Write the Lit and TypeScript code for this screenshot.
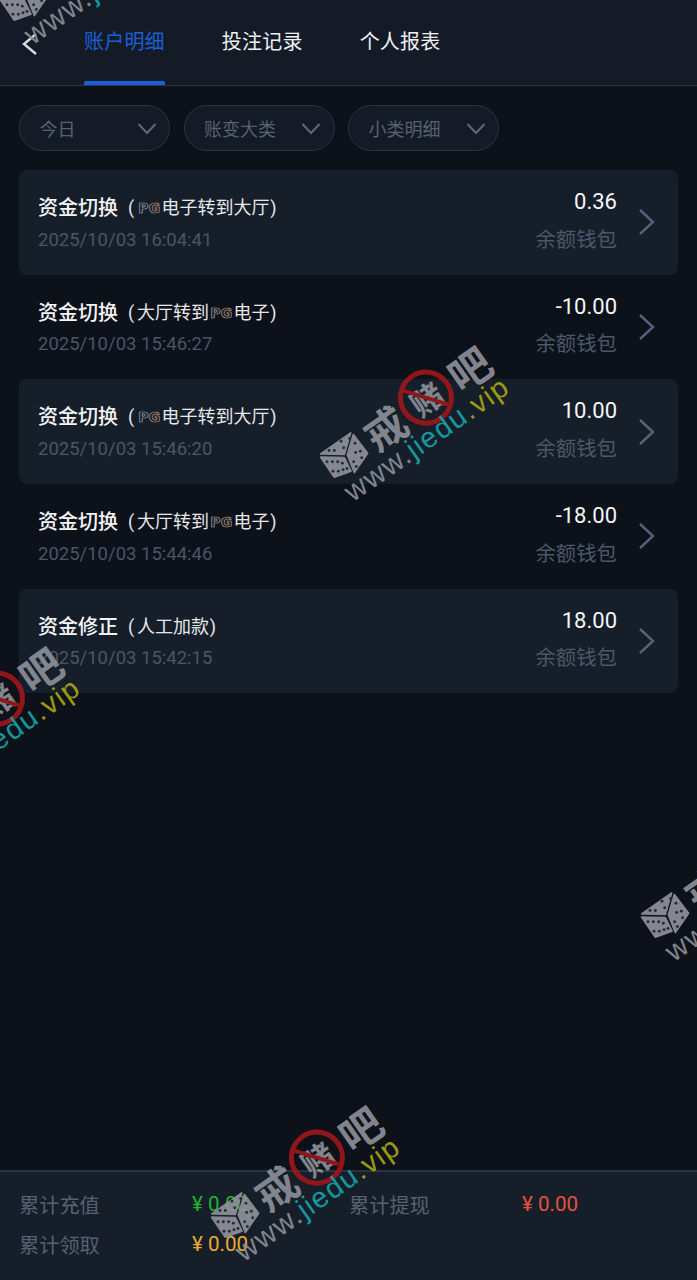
import { LitElement, html, css, svg } from "lit";
import { customElement } from "lit/decorators.js";

type Part = { t: string; pg?: boolean };
type Row = { title: string; note: Part[]; time: string; amount: string };

const ROWS: Row[] = [
  { title: "资金切换", note: [{ t: "PG", pg: true }, { t: "电子转到大厅" }], time: "2025/10/03 16:04:41", amount: "0.36" },
  { title: "资金切换", note: [{ t: "大厅转到" }, { t: "PG", pg: true }, { t: "电子" }], time: "2025/10/03 15:46:27", amount: "-10.00" },
  { title: "资金切换", note: [{ t: "PG", pg: true }, { t: "电子转到大厅" }], time: "2025/10/03 15:46:20", amount: "10.00" },
  { title: "资金切换", note: [{ t: "大厅转到" }, { t: "PG", pg: true }, { t: "电子" }], time: "2025/10/03 15:44:46", amount: "-18.00" },
  { title: "资金修正", note: [{ t: "人工加款" }], time: "2025/10/03 15:42:15", amount: "18.00" },
];

const MARKS: [number, number][] = [
  [344, 455],
  [235, 1215],
  [665, 915],
  [-85, 756],
  [24, -2],
];

const PIPS: [number, number][] = [
  [92, 22], [66, 30], [74, 50], [46, 58], [30, 58],
  [24, 92], [40, 92], [56, 92], [70, 96], [42, 120], [58, 120], [72, 116], [84, 112],
  [108, 36], [124, 60], [110, 64], [128, 80], [104, 92], [112, 106],
];

const dice = svg`<svg class="dice" viewBox="0 0 150 143" aria-hidden="true">
  <g fill="#8f9299" stroke="#8f9299" stroke-width="5" stroke-linejoin="round">
    <polygon points="95,5 5,68 76,70"></polygon>
    <polygon points="5,78 76,79 96,120 46,138"></polygon>
    <polygon points="103,10 146,66 106,124 85,71"></polygon>
  </g>
  <g fill="#2a2e37">
    ${PIPS.map(([x, y]) => svg`<circle cx=${x} cy=${y} r="4.4"></circle>`)}
  </g>
</svg>`;

@customElement("app-root")
export class AppRoot extends LitElement {
  static styles = css`
    :host {
      display: block;
      position: relative;
      width: 697px;
      height: 1280px;
      overflow: hidden;
      background: #0d1119;
      font-family: Roboto, "Noto Sans CJK SC", sans-serif;
      color: #fff;
    }
    .page { display: flex; flex-direction: column; height: 100%; }
    .bar {
      display: flex;
      align-items: stretch;
      height: 85px;
      flex: none;
      background: #141b27;
      border-bottom: 1px solid #2c3545;
      box-sizing: content-box;
    }
    .back { width: 84px; flex: none; display: flex; padding: 33px 0 0 22px; box-sizing: border-box; }
    .back svg { width: 18px; height: 22px; }
    .tabs { display: flex; gap: 57px; }
    .tab {
      position: relative;
      font-size: 20px;
      line-height: 24px;
      padding-top: 30px;
      color: #eef0f3;
      letter-spacing: 0.2px;
    }
    .tab.on { color: #1b5fd9; }
    .tab.on::after {
      content: "";
      position: absolute;
      left: 0;
      right: 0;
      bottom: 0;
      height: 4px;
      border-radius: 2px 2px 0 0;
      background: #1a5fdb;
    }
    .filters { display: flex; gap: 13.5px; padding: 19px; flex: none; }
    .pill {
      box-sizing: border-box;
      width: 151px;
      height: 46px;
      display: flex;
      align-items: center;
      justify-content: space-between;
      padding: 0 12.5px 0 19.5px;
      border: 1.5px solid #2b3442;
      border-radius: 23px;
      background: #141b26;
      font-size: 18px;
      color: #566173;
    }
    .pill svg { width: 20px; height: 13px; }
    .list { flex: 1; padding: 0 19px; display: flex; flex-direction: column; }
    .row {
      box-sizing: border-box;
      height: 104.7px;
      flex: none;
      display: flex;
      align-items: center;
      padding: 0 22px 0 19px;
      border-radius: 8px;
    }
    .row.alt { background: #161e2a; }
    .left { flex: 1; display: flex; flex-direction: column; gap: 6.5px; padding-top: 2px; }
    .head { display: flex; align-items: center; height: 26px; }
    .title { font-size: 20px; font-weight: 500; color: #f4f5f7; line-height: 26px; }
    .note { font-size: 18px; color: #e6e8ec; line-height: 26px; margin-left: 10px; display: flex; align-items: center; }
    .open { width: 9px; }
    .close { width: 7px; text-align: right; }
    .pg {
      font: 700 14px/1 "DejaVu Sans", sans-serif;
      color: #141a24;
      width: 24.5px;
      text-align: center;
      white-space: nowrap;
    }
    .pg b { font-weight: 700; -webkit-text-stroke: 0.7px #a9adb3; }
    .pg b + b { -webkit-text-stroke-color: #bd9a86; }
    .time { font-size: 18.5px; line-height: 24px; color: #4a5567; }
    .right { display: flex; flex-direction: column; align-items: flex-end; gap: 11.5px; margin: 0 21px 3px 0; }
    .amount { font-size: 22px; line-height: 26px; color: #f4f5f7; }
    .wallet { font-size: 20.4px; line-height: 26px; color: #4c5769; }
    .arrow { width: 18px; height: 28px; flex: none; }
    .foot {
      box-sizing: border-box;
      height: 110px;
      flex: none;
      background: #161e2a;
      border-top: 2px solid #2a3342;
      display: grid;
      grid-template-columns: 173px 157px 173px 1fr;
      grid-auto-rows: 40px;
      padding: 12px 19px 0;
      align-items: center;
      font-size: 20.2px;
    }
    .lab { color: #566172; }
    .val { font-size: 20.6px; }
    .green { color: #1fb52e; }
    .red { color: #e5513f; }
    .amber { color: #efa832; }

    .mark {
      position: absolute;
      width: 0;
      height: 0;
      transform: rotate(-35deg);
      pointer-events: none;
      opacity: 0.92;
    }
    .dice-wrap { position: absolute; left: -25px; top: -24px; width: 50px; height: 48px; transform: rotate(35deg); }
    .dice { width: 50px; height: 48px; display: block; }
    .han {
      position: absolute;
      top: -24px;
      font: 700 42px/48px "Noto Sans CJK SC", sans-serif;
      color: #8b8e96;
      white-space: nowrap;
    }
    .h1 { left: 28px; }
    .h3 { left: 131px; }
    .ban {
      position: absolute;
      left: 72px;
      top: -28px;
      box-sizing: border-box;
      width: 56px;
      height: 56px;
      border-radius: 50%;
      border: 5px solid #9c171c;
      display: flex;
      align-items: center;
      justify-content: center;
      font: 700 32px/1 "Noto Sans CJK SC", sans-serif;
      color: #8b8e96;
    }
    .ban::after {
      content: "";
      position: absolute;
      left: 0;
      right: 0;
      top: 50%;
      height: 4px;
      margin-top: -2px;
      background: #9c171c;
      transform: rotate(52deg);
    }
    .url {
      position: absolute;
      left: -20px;
      top: 17px;
      font: 400 29px/34px "Liberation Sans", sans-serif;
      letter-spacing: 1.4px;
      color: #8b8e96;
      white-space: nowrap;
    }
    .teal { color: #13a4a8; }
    .olive { color: #a8a50c; }
  `;

  private pill(label: string) {
    return html`<div class="pill"><span>${label}</span>
      <svg viewBox="0 0 20 13" fill="none" stroke="#5d6878" stroke-width="2"><path d="M1.5 2 L10 11 L18.5 2"></path></svg>
    </div>`;
  }

  render() {
    return html`
      <div class="page">
        <header class="bar">
          <div class="back">
            <svg viewBox="0 0 18 22" fill="none" stroke="#d9dbdf" stroke-width="2.4"><path d="M14 1 L2 11 L14 21"></path></svg>
          </div>
          <nav class="tabs">
            <div class="tab on">账户明细</div>
            <div class="tab">投注记录</div>
            <div class="tab">个人报表</div>
          </nav>
        </header>
        <div class="filters">
          ${this.pill("今日")}${this.pill("账变大类")}${this.pill("小类明细")}
        </div>
        <div class="list">
          ${ROWS.map(
            (r, i) => html`<div class="row ${i % 2 === 0 ? "alt" : ""}">
              <div class="left">
                <div class="head">
                  <span class="title">${r.title}</span>
                  <span class="note"><span class="open">(</span>${r.note.map((p) =>
                    p.pg ? html`<span class="pg"><b>P</b><b>G</b></span>` : p.t
                  )}<span class="close">)</span></span>
                </div>
                <div class="time">${r.time}</div>
              </div>
              <div class="right">
                <div class="amount">${r.amount}</div>
                <div class="wallet">余额钱包</div>
              </div>
              <svg class="arrow" viewBox="0 0 18 28" fill="none" stroke="#56627a" stroke-width="2.4"><path d="M2 2 L15 14 L2 26"></path></svg>
            </div>`
          )}
        </div>
        <footer class="foot">
          <div class="lab">累计充值</div><div class="val green">¥ 0.00</div>
          <div class="lab">累计提现</div><div class="val red">¥ 0.00</div>
          <div class="lab">累计领取</div><div class="val amber">¥ 0.00</div>
        </footer>
      </div>
      ${MARKS.map(
        ([x, y]) => html`<div class="mark" style="left:${x}px;top:${y}px">
          <div class="dice-wrap">${dice}</div>
          <span class="han h1">戒</span>
          <div class="ban">赌</div>
          <span class="han h3">吧</span>
          <div class="url">www.<span class="teal">jiedu</span><span class="olive">.vip</span></div>
        </div>`
      )}
    `;
  }
}
